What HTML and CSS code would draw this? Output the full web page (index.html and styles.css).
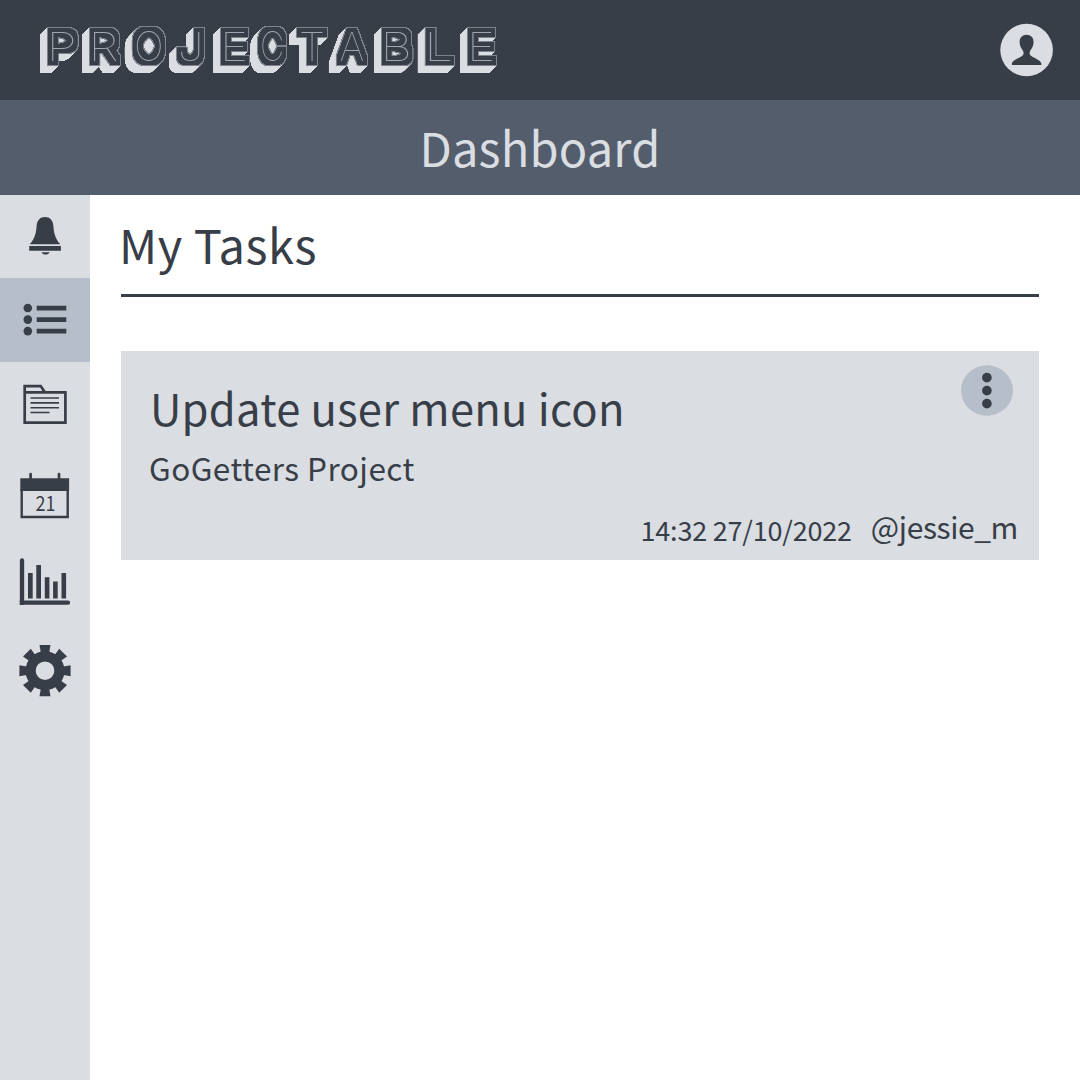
FILE: index.html
```html
<!DOCTYPE html>
<html lang="en">
<head>
<meta charset="utf-8">
<title>Projectable</title>
<link rel="stylesheet" href="styles.css">
</head>
<body>
<header class="topbar">
  <svg class="logo" width="540" height="99" viewBox="0 0 540 99">
    <defs>
      <filter id="block" filterUnits="userSpaceOnUse" x="0" y="0" width="540" height="99" color-interpolation-filters="sRGB">
        <feComponentTransfer in="SourceAlpha" result="solid"><feFuncA type="linear" slope="5" intercept="-0.4"/></feComponentTransfer>
        <feMorphology in="solid" operator="dilate" radius="4" result="face"/>
        <feMorphology in="solid" operator="dilate" radius="5" result="edge"/>
        <feOffset in="edge" dx="-1" dy="1" result="o1"/>
        <feMerge result="m1"><feMergeNode in="edge"/><feMergeNode in="o1"/></feMerge>
        <feOffset in="m1" dx="-2" dy="2" result="o2"/>
        <feMerge result="m2"><feMergeNode in="m1"/><feMergeNode in="o2"/></feMerge>
        <feOffset in="m2" dx="-4" dy="4" result="o3"/>
        <feMerge result="m3"><feMergeNode in="m2"/><feMergeNode in="o3"/></feMerge>
        <feFlood flood-color="#dadde2"/><feComposite in2="m3" operator="in" result="side"/>
        <feFlood flood-color="#7e848e"/><feComposite in2="edge" operator="in" result="rim"/>
        <feFlood flood-color="#383e48"/><feComposite in2="face" operator="in" result="front"/>
        <feMerge><feMergeNode in="side"/><feMergeNode in="rim"/><feMergeNode in="front"/><feMergeNode in="SourceGraphic"/></feMerge>
      </filter>
    </defs>
    <g class="logo-text" filter="url(#block)"><text transform="translate(46.500 61) scale(1.25 1)">P</text><text transform="translate(88.500 61) scale(1.22 1)">R</text><text transform="translate(134 61) scale(.99 1)">O</text><text transform="translate(177.500 61) scale(1.18 1)">J</text><text transform="translate(220 61) scale(1.200 1)">E</text><text transform="translate(260 61) scale(.84 1)">C</text><text transform="translate(299 61) scale(1.060 1)">T</text><text transform="translate(339.500 61) scale(.97 1)">A</text><text transform="translate(380.500 61) scale(1.23 1)">B</text><text transform="translate(424 61) scale(1.30 1)">L</text><text transform="translate(467 61) scale(1.2 1)">E</text></g>
  </svg>
  <svg class="avatar" width="54" height="54" viewBox="1000 23 54 54">
    <circle cx="1026.600" cy="50" r="26.300" fill="#dadde2"/>
    <path fill="#383e48" d="M1026.600 34.700c4.200 0 7 3 7 7.300 0 3.700-1.600 6.100-3.200 8.500-1 1.500-1.100 3.200 0 4.700 1.900 2.400 9.900 4.100 10.900 8v1.700h-29.400v-1.700c1-3.900 9-5.600 10.900-8 1.100-1.500 1-3.200 0-4.700-1.600-2.400-3.200-4.800-3.200-8.500 0-4.300 2.800-7.300 7-7.300z"/>
  </svg>
</header>
<div class="titlebar"><h1>Dashboard</h1></div>
<div class="body">
  <nav class="sidebar">
    <a class="item"><svg width="90" height="82.500" viewBox="0 195 90 82.500">
      <path d="M29.700 244.300c5.200-5.400 6.500-12 6.900-18.300.3-5.500 3.500-8.900 8.400-8.900s8.100 3.400 8.400 8.900c.4 6.300 1.700 12.900 6.900 18.300zM29.200 246h31.700v4.800H29.200zM41.500 252.200h8.200c-.8 1.600-2.300 2.400-4.100 2.400s-3.300-.8-4.100-2.400z"/></svg></a>
    <a class="item active"><svg width="90" height="84" viewBox="0 278 90 84">
      <circle cx="27.800" cy="308" r="4.300"/><circle cx="27.800" cy="319.600" r="4.300"/><circle cx="27.800" cy="331.100" r="4.300"/>
      <path d="M36.700 305.700h29.600v4.700H36.700zM36.700 317.200h29.600v4.700H36.700zM36.700 328.800h29.600v4.700H36.700z"/></svg></a>
    <a class="item"><svg width="90" height="85.500" viewBox="0 361.500 90 85.500">
      <g class="line"><path stroke-width="2.700" d="M24.700 391.800h40.700v30.300H24.700v-36.500h16l4 6"/><path stroke-width="1.600" d="M30.500 397.500H59M30.500 402.400H59M30.500 407.200H59M30.500 412h19"/></g></svg></a>
    <a class="item"><svg width="90" height="89" viewBox="0 447 90 89">
      <path d="M20.300 478.200h48.800v12.900H20.300z"/><g class="line"><path stroke-width="2.400" d="M21.700 489v28H67.700v-28"/><path stroke-width="2.700" stroke-linecap="round" d="M30.600 474v6M59 474v6"/></g><text class="day" x="45.600" y="511" text-anchor="middle" textLength="20" lengthAdjust="spacingAndGlyphs">21</text></svg></a>
    <a class="item"><svg width="90" height="90" viewBox="0 536 90 90">
      <path class="line" stroke-width="4.300" stroke-linecap="round" d="M22 560.500v42.200h46"/><path d="M19.800 600h4v4.900h-4zM28 573h4.700v25.500H28zM36.300 565H41v33.500h-4.700zM44.800 577.300h4.600v21.200h-4.600zM53.100 581.500h4.600v17h-4.600zM61.500 573h4.600v25.500h-4.600z"/></svg></a>
    <a class="item"><svg width="90" height="90" viewBox="0 626 90 90">
      <g transform="translate(45 670.700)"><path fill-rule="evenodd" d="M-19.500 0a19.500 19.500 0 1 0 39 0a19.500 19.500 0 1 0-39 0zM-9.300 0a9.300 9.300 0 1 0 18.600 0a9.300 9.300 0 1 0-18.600 0z"/>
      <path id="tooth" d="M-5.500-25.600h11L4-17h-8z"/><use href="#tooth" transform="rotate(45)"/><use href="#tooth" transform="rotate(90)"/><use href="#tooth" transform="rotate(135)"/><use href="#tooth" transform="rotate(180)"/><use href="#tooth" transform="rotate(225)"/><use href="#tooth" transform="rotate(270)"/><use href="#tooth" transform="rotate(315)"/></g></svg></a>
  </nav>
  <main class="content">
    <h2>My Tasks</h2>
    <article class="card">
      <div class="card-head">
        <div>
          <h3>Update user menu icon</h3>
          <p class="project">GoGetters Project</p>
        </div>
        <svg class="more" width="52" height="51" viewBox="0 0 52 51"><ellipse cx="26" cy="25.500" rx="26" ry="25.200" fill="#b6bec9"/><ellipse cx="25.900" cy="12.600" rx="4.800" ry="4.900"/><ellipse cx="25.900" cy="25.600" rx="4.800" ry="4.900"/><ellipse cx="25.900" cy="38.600" rx="4.800" ry="4.900"/></svg>
      </div>
      <div class="meta"><time>14:32 27/10/2022</time><span class="user">@jessie_m</span></div>
    </article>
  </main>
</div>
</body>
</html>
```
FILE: styles.css
```css
* { box-sizing: border-box; }
body {
  margin: 0;
  width: 1080px;
  height: 1080px;
  display: flex;
  flex-direction: column;
  overflow: hidden;
  background: #fff;
  color: #383e48;
  font-family: "Noto Sans CJK SC", "Noto Sans", sans-serif;
}
h1, h2, h3, p { margin: 0; font-weight: 400; white-space: nowrap; }
svg { display: block; fill: #383e48; }
.topbar {
  height: 99.5px;
  flex: none;
  display: flex;
  justify-content: space-between;
  padding-right: 26px;
  background: #383e48;
}
.avatar { margin-top: 23px; }
.logo-text { font-family: Inter, sans-serif; font-weight: 100; font-size: 40px; fill: #a0a6b0; }
.titlebar {
  height: 95.5px;
  flex: none;
  display: flex;
  justify-content: center;
  background: #545d6b;
  color: #dadde2;
}
h1 { font-size: 47px; line-height: 93px; letter-spacing: 0.2px; }
.body { flex: 1; display: flex; }
.sidebar { width: 90px; background: #dadde2; }
.item { display: block; }
.active { background: #b6bec9; }
.line { fill: none; stroke: #383e48; }
.day { font-size: 21px; }
.content { flex: 1; padding: 0 41px 0 31px; }
h2 {
  height: 102px;
  font-size: 47px;
  line-height: 98px;
  letter-spacing: 0.5px;
  text-indent: -2px;
  border-bottom: 3px solid #383e48;
}
.card {
  height: 209px;
  margin-top: 54px;
  padding: 14px 21px 0 28px;
  background: #dadde2;
}
.card-head { display: flex; justify-content: space-between; height: 141px; }
.more { margin-right: 5px; }
h3 { font-size: 43.500px; line-height: 86px; padding-left: 1px; letter-spacing: 0.26px; }
.project { font-size: 31.500px; line-height: 32px; letter-spacing: 0.45px; }
.meta { display: flex; justify-content: flex-end; gap: 19px; }
time { font-size: 27px; line-height: 47px; letter-spacing: -0.2px; }
.user { font-size: 30px; line-height: 41px; letter-spacing: -0.4px; }
```
